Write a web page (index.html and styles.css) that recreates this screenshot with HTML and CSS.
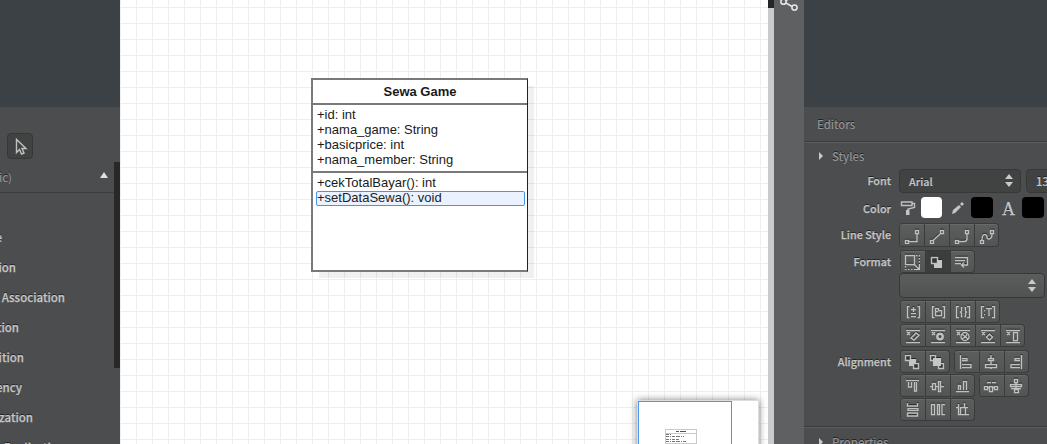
FILE: index.html
```html
<!DOCTYPE html>
<html lang="en">
<head>
<meta charset="utf-8">
<title>Class diagram editor</title>
<link rel="stylesheet" href="styles.css">
</head>
<body>
<div class="app">
  <aside class="toolbox">
    <div class="panel-top"></div>
    <div class="toolbar">
      <button class="tool" aria-label="Select"><svg width="24" height="24" viewBox="0 0 24 24"><path class="line" d="M8.5 5.5v13l3-3 2 4.5 2.5-1-2-4.5h4z"/></svg></button>
    </div>
    <div class="toolbox-body">
      <div class="toolbox-main">
        <div class="section"><span class="clip end-12">(Basic)</span><i class="up"></i></div>
        <ul class="tools">
          <li class="clip end-2">Interface</li>
          <li class="clip end-16">Association</li>
          <li class="clip end-65">Association</li>
          <li class="clip end-19">Aggregation</li>
          <li class="clip end-24">Composition</li>
          <li class="clip end-22">Dependency</li>
          <li class="clip end-33">Generalization</li>
          <li class="clip end-65">Realization</li>
        </ul>
      </div>
      <div class="track"><div class="thumb"></div></div>
    </div>
  </aside>

  <main class="canvas">
    <article class="uml">
      <h1>Sewa Game</h1>
      <div class="attrs"><p>+id: int</p><p>+nama_game: String</p><p>+basicprice: int</p><p>+nama_member: String</p></div>
      <div class="ops"><p>+cekTotalBayar(): int</p><p class="selected">+setDataSewa(): void</p></div>
    </article>
    <div class="minimap">
      <div class="viewport">
        <svg width="32" height="18" viewBox="0 0 32 18" shape-rendering="crispEdges"><path d="M.5 18V.5h31V18M1 4.5h30" fill="none" stroke="#c8c8c8"/><path d="M11 2.5h11" stroke="#555" stroke-dasharray="3 .5"/><path d="M1 5.5h6M1 7.5h18M1 10.5h13M1 12.5h20" stroke="#777" stroke-dasharray="3 1 1 .5"/><path d="M1 14.5h30" stroke="#ccc"/></svg>
      </div>
    </div>
  </main>
  <div class="scroll"><div class="scroll-thumb"></div></div>
  <div class="rail"><svg width="22" height="14" viewBox="0 0 22 14"><g fill="none" stroke="#e4e4e4" stroke-width="1.6"><circle cx="5.5" cy="1.7" r="2.6"/><circle cx="16.5" cy="7.6" r="2.6"/><path d="M8 3l6 3.5M8 1l3-3"/></g></svg></div>

  <aside class="inspector">
    <div class="panel-top"></div>
    <h2>Editors</h2>
    <div class="styles-head"><i class="right"></i>Styles</div>
    <div class="row font-row"><label>Font</label><div class="select dark font">Arial<i class="spin"></i></div><div class="select dark size">13</div></div>
    <div class="row color-row"><label>Color</label>
      <svg class="ico-roller" width="16" height="16" viewBox="0 0 16 16"><path class="line" d="M1.5 2h10.500v3.500H1.500zM12 3.500h2.500v4L8 9v2"/><path class="fill" d="M6 10h3.500v5H6z"/></svg>
      <span class="swatch white"></span>
      <svg class="ico-pen" width="14" height="14" viewBox="0 0 14 14"><path class="fill" d="M1 13l1-4 6-5 2 2-6 6zM9 3l2-2 2 2-2 2z"/></svg>
      <span class="swatch"></span><span class="letter">A</span><span class="swatch"></span>
    </div>
    <div class="row line-row"><label>Line Style</label>
      <div class="group">
        <button><svg viewBox="0 0 16 16"><path class="line" d="M1.500 12.500h3v3h-3zM11.500 2.500h3v3h-3zM5 13.500h8V6"/></svg></button>
        <button><svg viewBox="0 0 16 16"><path class="line" d="M1.500 12.500h3v3h-3zM11.500 2.500h3v3h-3zM4 12.500L12 5"/></svg></button>
        <button><svg viewBox="0 0 16 16"><path class="line" d="M1.500 12.500h3v3h-3zM11.500 2.500h3v3h-3zM5 13.500h5q3 0 3-3V6"/></svg></button>
        <button><svg viewBox="0 0 16 16"><path class="line" d="M1.500 12.500h3v3h-3zM11.500 2.500h3v3h-3zM3 12c0-8 5-6 5-3s5 3 5-3"/></svg></button>
      </div>
    </div>
    <div class="row format-row"><label>Format</label>
      <div class="group">
        <button><svg viewBox="0 0 16 16"><path class="line" d="M1.500 1.500h9v9h-9z"/><path class="line dash" d="M12 1.500h3.500V15M1.500 12v3.500H11"/><path class="line" d="M10 10l5 5M11 15.500h4.500V11"/></svg></button>
        <button class="on"><svg viewBox="0 0 16 16"><path class="fill" d="M5 6h8v8H5z"/><path class="line shade" d="M2.500 3.500h6v6h-6z"/></svg></button>
        <button><svg viewBox="0 0 16 16"><path class="line" d="M1 3.500h12.500v7.500H8M1 6.500h10M1 9.500h6M10 8.500L7.500 11l2.500 2.500"/></svg></button>
      </div>
    </div>
    <div class="row stereo-row"><div class="select wide"><i class="spin"></i></div></div>

    <div class="row r1">
      <div class="group">
        <button><svg viewBox="0 0 16 16"><path class="line" d="M4.500 2.500h-2v11h2M12.500 2.500h2v11h-2M8.500 3v5M6 5.500h5M6 9.500h5M6 12.500h5"/></svg></button>
        <button><svg viewBox="0 0 16 16"><path class="line" d="M4.500 2.500h-2v11h2M12.500 2.500h2v11h-2M5.500 11.500v-7h3v2h3v5zM6 7.500h2"/></svg></button>
        <button><svg viewBox="0 0 16 16"><path class="line" d="M4 2.500H1.500v11H4M12 2.500h2.500v11H12M7.500 3.500h-1v3.500l-1 1 1 1v3.500h1M9.500 3.500h1v3.500l1 1-1 1v3.500h-1"/></svg></button>
        <button><svg viewBox="0 0 16 16"><path class="line" d="M4 2.500H1.500v11H4M12 2.500h2.500v11H12M6 4.500h6M9 5v7M4 6.500h1M4 10.500h1"/></svg></button>
      </div>
    </div>
    <div class="row r2">
      <div class="group">
        <button><svg viewBox="0 0 16 16"><path class="line" d="M1 2.500h14M1 14.500h14M2 4l3 3M5 4L2 7M6 10l5-5 3 2-5 5z"/></svg></button>
        <button><svg viewBox="0 0 16 16"><path class="line" d="M1 2.500h14M1 14.500h14M2 4l3 3M5 4L2 7"/><circle class="line thick" cx="10" cy="8.500" r="2.700"/></svg></button>
        <button><svg viewBox="0 0 16 16"><path class="line" d="M1 2.500h14M1 14.500h14M2 4l3 3M5 4L2 7M7 6l6 5M7 11l4-3 1-2"/><circle class="line" cx="10" cy="8.500" r="4"/></svg></button>
        <button><svg viewBox="0 0 16 16"><path class="line" d="M1 2.500h14M1 14.500h14M2 4l3 3M5 4L2 7M6.500 9l3-3 3 3-3 3z"/></svg></button>
        <button><svg viewBox="0 0 16 16"><path class="line" d="M1 2.500h14M1 14.500h14M2 4l3 3M5 4L2 7M8.500 4.500h4v8h-4z"/></svg></button>
      </div>
    </div>
    <div class="row r3"><label>Alignment</label>
      <div class="group">
        <button><svg viewBox="0 0 16 16"><path class="fill" d="M5 5h7v7H5z"/><path class="line shade" d="M1.500 1.500h5v5h-5zM9.500 9.500h5v5h-5z"/></svg></button>
        <button><svg viewBox="0 0 16 16"><path class="line shade" d="M1.500 1.500h5v5h-5zM9.500 9.500h5v5h-5z"/><path class="fill" d="M4 4h8v8H4z"/></svg></button>
      </div>
      <div class="group">
        <button><svg viewBox="0 0 16 16"><path class="line" d="M2.500 1v14M4 4.500h5v2H4M4 10.500h9v3H4"/></svg></button>
        <button><svg viewBox="0 0 16 16"><path class="line" d="M8 1v3M5.500 4.500h5v2h-5zM8 7v3M2.500 10.500h11v3h-11zM8 14v1"/></svg></button>
        <button><svg viewBox="0 0 16 16"><path class="line" d="M13.500 1v14M12 4.500H7v2h5M12 10.500H3v3h9"/></svg></button>
      </div>
    </div>
    <div class="row r4">
      <div class="group">
        <button><svg viewBox="0 0 16 16"><path class="line" d="M2 2.500h13M4.500 4v5h3V4M10.500 4v9h2V4"/></svg></button>
        <button><svg viewBox="0 0 16 16"><path class="line" d="M1 8.500h2M3.500 5.500h3v6h-3zM7 8.500h2M9.500 3.500h2v10h-2zM12 8.500h3"/></svg></button>
        <button><svg viewBox="0 0 16 16"><path class="line" d="M2 13.500h13M4.500 12V7.500h2V12M9.500 12V3.500h3V12"/></svg></button>
      </div>
      <div class="group">
        <button><svg viewBox="0 0 16 16"><path class="line" d="M4 4.500h4M9 4.500h4M1.500 8.500h3v3h-3zM6.500 8.500h3v5h-3zM11.500 8.500h3v3h-3zM5 9.500h1M10 9.500h1"/></svg></button>
        <button><svg viewBox="0 0 16 16"><path class="line" d="M6.500 1.500h3v3h-3zM2.500 6.500h11v2h-11zM6.500 11.500h4v3h-4zM8 4v7M3 10.500h10"/></svg></button>
      </div>
    </div>
    <div class="row r5">
      <div class="group">
        <button><svg viewBox="0 0 16 16"><path class="line" d="M2.500 1v3h10V1M3 6.500h10v2H3zM2.500 14v-3h10v3z"/></svg></button>
        <button><svg viewBox="0 0 16 16"><path class="line" d="M1.500 2.500h3v10h-3zM7.500 2.500h2v10h-2zM15 2.500h-3v10h3"/></svg></button>
        <button><svg viewBox="0 0 16 16"><path class="line" d="M3.500 2v10.500h2M1 5.500h3M9.500 1v4M5 5.500h8M5.500 5.500h5v7h-5zM11 12.500h3"/></svg></button>
      </div>
    </div>
    <div class="properties"><i class="right"></i>Properties</div>
  </aside>
</div>
</body>
</html>
```
FILE: styles.css
```css
* { box-sizing: border-box; }
body { margin: 0; overflow: hidden; }
button { padding: 0; border: 0; margin: 0; background: none; display: block; }
svg { display: block; flex: none; }

.app {
  display: flex;
  width: 1047px;
  height: 444px;
  overflow: hidden;
  background: #4c4d4f;
  color: #c5c6c7;
  font: 500 11.3px/16px "Noto Sans CJK SC", "Noto Sans", sans-serif;
  text-shadow: 0 -1px 0 #222;
}
.line { fill: none; stroke: #bfc1c0; stroke-width: 1.4; }
.line.thick { stroke-width: 2.5; }
.line.dash { stroke-dasharray: 1.500 1.500; }
.line.shade { fill: #333635; }
.fill { fill: #c4c6c5; }
.panel-top { height: 107px; background: #3b4144; }

/* Toolbox */
.toolbox { width: 120px; flex: none; overflow: hidden; }
.toolbar { height: 55px; padding: 26px 0 0 7px; }
.tool {
  width: 26px;
  height: 26px;
  border: 1px solid #363837;
  border-radius: 4px;
  background: #414342;
}
.toolbox-body { display: flex; height: 282px; }
.toolbox-main { flex: 1; min-width: 0; overflow: hidden; }
.section {
  display: flex;
  justify-content: space-between;
  height: 31px;
  padding: 7px 6px 0 0;
  border-bottom: 1px solid #3b3c3c;
  color: #929394;
}
.up { width: 0; height: 0; margin-top: 3px; border: solid transparent; border-width: 0 4px 6px; border-bottom-color: #dfe0e0; }
.clip { display: flex; justify-content: flex-end; overflow: hidden; white-space: nowrap; }
.tools { list-style: none; margin: 0; padding: 36px 0 0; font-size: 11.5px; -webkit-text-stroke: .25px #c5c6c7; }
.tools li { height: 16px; margin-bottom: 14px; }
.end-2 { width: 2px; }
.end-12 { width: 12px; }
.end-16 { width: 16px; }
.end-19 { width: 19px; }
.end-22 { width: 22px; }
.end-24 { width: 24px; }
.end-33 { width: 33px; }
.end-65 { width: 65px; }
.track { width: 6px; }
.thumb { height: 206px; background: #282828; }

/* Diagram */
.canvas {
  position: relative;
  width: 648px;
  flex: none;
  overflow: hidden;
  background-color: #fff;
  background-image: linear-gradient(90deg, #eee 1px, transparent 1px), linear-gradient(#eee 1px, transparent 1px);
  background-size: 16px 16px;
  background-position: 0 7px;
  color: #1a1a1a;
  text-shadow: none;
}
.uml {
  position: absolute;
  left: 191px;
  top: 78px;
  width: 217px;
  height: 194px;
  border: 2px solid #7a7a7a;
  border-right: 1px solid #222;
  background: #fff;
  box-shadow: 7px 7px 0 -1px rgba(0, 0, 0, .06);
  font: 13px/15px "Liberation Sans", Arial, sans-serif;
}
.uml h1 { height: 25px; margin: 0; padding-top: 4px; border-bottom: 2px solid #7a7a7a; text-align: center; font: bold 13px/15px "Liberation Sans", Arial, sans-serif; }
.uml p { margin: 0; height: 15px; padding-left: 4px; }
.attrs { height: 68px; padding-top: 2px; border-bottom: 2px solid #7a7a7a; }
.ops { padding-top: 2px; }
.uml p.selected { margin: 1px 2px 0 3px; padding: 0; border: 1px solid #4a92f0; border-radius: 2px; background: #eaf2ff; line-height: 11px; color: #222; }

.minimap {
  position: absolute;
  left: 517px;
  top: 400px;
  width: 122px;
  height: 80px;
  border: 1px solid #ddd;
  background: #fff;
  box-shadow: 0 0 7px rgba(0, 0, 0, .5);
}
.viewport { width: 94px; height: 80px; padding: 27px 0 0 26px; border: 1px solid #4f96f3; }

.scroll { width: 6px; flex: none; background: #cbcbcb; }
.scroll-thumb { height: 8px; background: #262626; }
.rail { width: 30px; flex: none; padding-left: 4px; background: #5f6062; }

/* Inspector */
.inspector { width: 243px; flex: none; height: 444px; overflow: hidden; }
.inspector h2 { height: 36px; margin: 0; padding: 9px 0 0 13px; border-bottom: 1px solid #5d5e5f; box-shadow: inset 0 -1px #3a3b3b; color: #929394; font: inherit; }
.styles-head, .properties { display: flex; align-items: center; gap: 9px; padding-left: 15px; color: #929394; }
.styles-head { height: 26px; padding-bottom: 1px; }
.right { border: solid transparent; border-width: 4px 0 4px 4px; border-left-color: #c8c9c9; }
.row { display: flex; padding-left: 96px; }
.row label { width: 87px; margin-left: -96px; margin-right: 9px; flex: none; text-align: right; padding-top: 3px; font-size: 10.8px; -webkit-text-stroke: .25px #c5c6c7; }
.select { display: flex; align-items: center; justify-content: space-between; flex: none; border: 1px solid #373838; border-radius: 4px; height: 24px; padding: 0 8px 0 9px; background: linear-gradient(#5b5d5c, #515352); }
.select.dark { background: #414342; -webkit-text-stroke: .2px #c5c6c7; }
.select.font { width: 122px; margin-left: -1px; padding-right: 7px; padding-bottom: 1px; font-size: 10.8px; }
.select.size { width: 50px; margin-left: 5px; padding-bottom: 1px; }
.select.wide { width: 146px; height: 25px; margin-left: -1px; }
.spin { display: flex; flex-direction: column; gap: 3px; margin-left: auto; }
.spin::before, .spin::after { content: ""; border: solid transparent; border-width: 0 4px 5px; border-bottom-color: #c8c9c9; }
.spin::after { border-width: 5px 4px 0; border-top-color: #c8c9c9; }
.font-row { height: 28px; }
.color-row { height: 26px; }
.swatch { width: 22px; height: 21px; flex: none; border-radius: 4px; background: #000; }
.swatch.white { width: 21px; background: #fff; margin-right: 10px; }
.ico-roller { margin: 3px 5px 0 0; }
.ico-pen { margin: 4px 6px 0 -1px; }
.letter { width: 13px; margin: 2px 7px 0 9px; font: 18px/20px "Liberation Serif", serif; text-shadow: 0 -1px #222; -webkit-text-stroke: .3px #c5c6c7; }
.group { display: flex; height: 23px; flex: none; border: solid #3a3b3b; border-width: 1px 1px 1px 0; border-radius: 4px; overflow: hidden; background: linear-gradient(#5c5e5d, #535554); box-shadow: inset 0 1px #686a69; }
.group + .group { margin-left: 4px; }
.group button { width: 25px; height: 22px; padding: 2px 4px; border-left: 1px solid #3a3b3b; }
.group button:last-child { width: 24px; padding-right: 3px; }
.group svg { width: 16px; height: 16px; filter: drop-shadow(0 -1px 0 #252726); }
.group button.on { background: #3c3e3d; }
.line-row { height: 27px; }
.line-row .group { height: 24px; margin-left: -1px; }
.line-row button { padding-top: 3px; }
.format-row { height: 23px; }
.format-row .group svg { margin-left: -1px; }
.stereo-row { height: 27px; }
.r1 { height: 24px; }
.r2 { height: 26px; }
.r3, .r4 { height: 24px; }
.r5 { height: 29px; border-bottom: 1px solid #3a3b3b; }
.r3 svg, .r4 svg { margin-left: -1px; }
.properties { height: 30px; border-top: 1px solid #5d5e5f; padding-bottom: 1px; }
```
